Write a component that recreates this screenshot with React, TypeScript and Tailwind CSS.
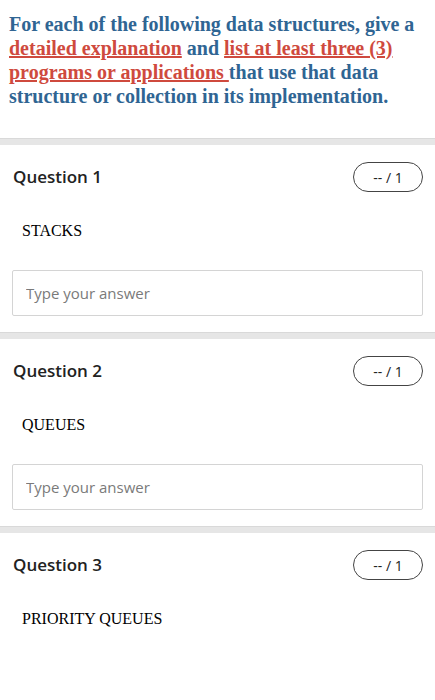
const questions = [
  { n: 1, title: "STACKS", input: true },
  { n: 2, title: "QUEUES", input: true },
  { n: 3, title: "PRIORITY QUEUES", input: false },
];

function Separator() {
  return <div className="h-[7px] bg-[#e6e6e6] border-t border-[#d9d9d9]" />;
}

function QuestionCard({ n, title, input }: { n: number; title: string; input: boolean }) {
  return (
    <div className="px-3 pt-[17px] pb-4 bg-white">
      <div className="flex items-center justify-between">
        <div className="pl-px text-[17px] font-semibold text-[#222] font-['Open_Sans',sans-serif]">
          Question {n}
        </div>
        <div className="h-[30px] w-[70px] rounded-full border border-[#444] flex items-center justify-center text-[14px] text-[#222] font-['Open_Sans',sans-serif]">
          -- / 1
        </div>
      </div>
      <div className="pl-[10px] pt-[29px] text-[16px] leading-[20px] text-black font-['Liberation_Serif',serif]">
        {title}
      </div>
      {input && (
        <input
          className="mt-[29px] block w-full h-[46px] border border-[#d4d4d4] rounded-[2px] px-[13px] text-[15px] placeholder:text-[#7a7a7a] font-['Open_Sans',sans-serif] outline-none"
          placeholder="Type your answer"
        />
      )}
    </div>
  );
}

export default function App() {
  return (
    <div className="w-[435px] h-[700px] bg-white overflow-hidden">
      <div className="px-[9px] pt-[12px] pb-[30px] text-[20px] leading-[24px] font-bold text-[#2f6593] font-['Liberation_Serif',serif]">
        For each of the following data structures, give a{" "}
        <span className="text-[#cf4a3e] underline">detailed explanation</span> and{" "}
        <span className="text-[#cf4a3e] underline">list at least three (3)</span>{" "}
        <span className="text-[#cf4a3e] underline">programs or applications </span>that use that data
        structure or collection in its implementation.
      </div>
      {questions.map((q) => (
        <div key={q.n}>
          <Separator />
          <QuestionCard {...q} />
        </div>
      ))}
    </div>
  );
}
